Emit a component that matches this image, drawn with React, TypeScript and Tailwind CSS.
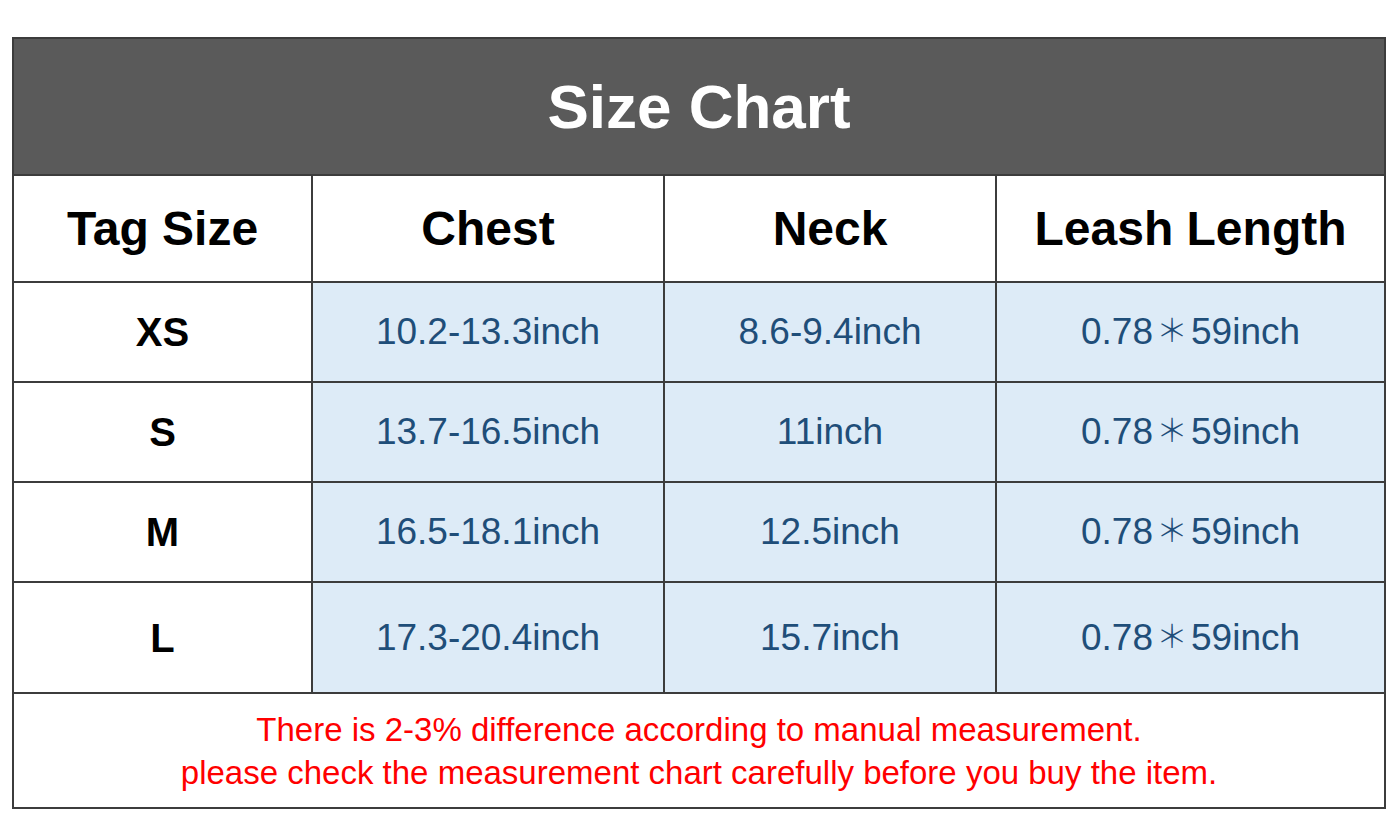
const rows = [
  { tag: 'XS', chest: '10.2-13.3inch', neck: '8.6-9.4inch', h: 'h-[100px]' },
  { tag: 'S', chest: '13.7-16.5inch', neck: '11inch', h: 'h-[100px]' },
  { tag: 'M', chest: '16.5-18.1inch', neck: '12.5inch', h: 'h-[100px]' },
  { tag: 'L', chest: '17.3-20.4inch', neck: '15.7inch', h: 'h-[111px]' },
];

const font = "font-['Liberation_Sans','Noto_Sans_CJK_SC',sans-serif]";

function Leash() {
  return (
    <span>
      0.78
      <span className="inline-block w-[38px] text-center text-[32px] align-[2px] font-light">＊</span>
      59inch
    </span>
  );
}

export default function App() {
  return (
    <div className={`w-[1400px] h-[840px] bg-white pt-[37px] pl-[12px] ${font}`}>
      <table className="w-[1372px] border-collapse table-fixed">
        <colgroup>
          <col className="w-[299px]" />
          <col className="w-[352px]" />
          <col className="w-[332px]" />
          <col className="w-[389px]" />
        </colgroup>
        <thead>
          <tr className="h-[137px]">
            <th colSpan={4} className="bg-[#5a5a5a] border-2 border-[#3c3c3c] text-white text-[62px] font-bold text-center">
              Size Chart
            </th>
          </tr>
          <tr className="h-[107px]">
            {['Tag Size', 'Chest', 'Neck', 'Leash Length'].map((t) => (
              <th key={t} className="bg-white border-2 border-[#3c3c3c] text-black text-[48px] font-bold text-center">
                {t}
              </th>
            ))}
          </tr>
        </thead>
        <tbody>
          {rows.map((r) => (
            <tr key={r.tag} className={r.h}>
              <td className="bg-white border-2 border-[#3c3c3c] text-black text-[40px] font-bold text-center">{r.tag}</td>
              <td className="bg-[#ddebf7] border-2 border-[#3c3c3c] text-[#1f4e79] text-[37px] text-center">{r.chest}</td>
              <td className="bg-[#ddebf7] border-2 border-[#3c3c3c] text-[#1f4e79] text-[37px] text-center">{r.neck}</td>
              <td className="bg-[#ddebf7] border-2 border-[#3c3c3c] text-[#1f4e79] text-[37px] text-center">
                <Leash />
              </td>
            </tr>
          ))}
          <tr className="h-[115px]">
            <td colSpan={4} className="bg-white border-2 border-[#3c3c3c] text-[#ff0000] text-[33px] leading-[43px] text-center">
              There is 2-3% difference according to manual measurement.
              <br />
              please check the measurement chart carefully before you buy the item.
            </td>
          </tr>
        </tbody>
      </table>
    </div>
  );
}
